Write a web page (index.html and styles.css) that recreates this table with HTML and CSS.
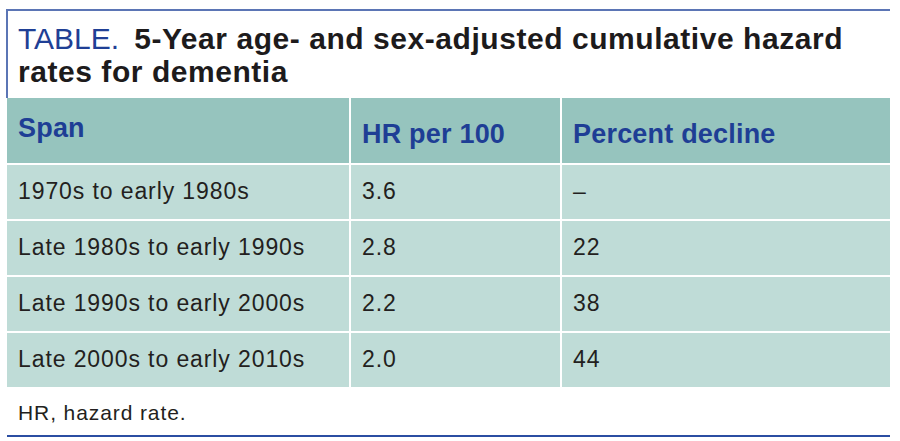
FILE: index.html
```html
<!DOCTYPE html>
<html lang="en">
<head>
<meta charset="utf-8">
<title>TABLE. 5-Year age- and sex-adjusted cumulative hazard rates for dementia</title>
<link rel="stylesheet" href="styles.css">
</head>
<body>
<div class="figure">
  <h1 class="caption"><span class="label">TABLE.</span>5-Year age- and sex-adjusted cumulative hazard<br>rates for dementia</h1>
  <div class="table">
    <div class="cell head first">Span</div>
    <div class="cell head">HR per 100</div>
    <div class="cell head">Percent decline</div>

    <div class="cell">1970s to early 1980s</div>
    <div class="cell">3.6</div>
    <div class="cell">–</div>

    <div class="cell">Late 1980s to early 1990s</div>
    <div class="cell">2.8</div>
    <div class="cell">22</div>

    <div class="cell">Late 1990s to early 2000s</div>
    <div class="cell">2.2</div>
    <div class="cell">38</div>

    <div class="cell">Late 2000s to early 2010s</div>
    <div class="cell">2.0</div>
    <div class="cell">44</div>
  </div>
  <div class="footnote">HR, hazard rate.</div>
</div>
</body>
</html>
```

FILE: styles.css
```css
html, body {
  margin: 0;
  padding: 0;
  background: #ffffff;
}

body {
  font-family: "Liberation Sans", Arial, Helvetica, sans-serif;
  color: #231f20;
}

.figure {
  width: 884px;
  margin-left: 6px;
  padding-top: 9px;
}

.caption {
  margin: 0;
  border-top: 2px solid #5b75b5;
  border-left: 2px solid #5b75b5;
  padding: 11px 0 10px 10px;
  font-size: 30px;
  line-height: 33px;
  font-weight: bold;
  color: #1d1b1c;
  letter-spacing: 0.55px;
  white-space: nowrap;
}

.label {
  font-weight: normal;
  color: #1f3f95;
  letter-spacing: 0;
  margin-right: 15px;
}

.table {
  margin-left: 1px;
  display: grid;
  grid-template-columns: 342px 209px 1fr;
  grid-template-rows: 65px repeat(4, 54px);
  gap: 2px;
  background: #ffffff;
}

.cell {
  background: #bfdcd7;
  padding: 0 0 2px 11px;
  display: flex;
  align-items: center;
  font-size: 23px;
  line-height: 28px;
  letter-spacing: 0.9px;
  color: #231f20;
}

.cell.head {
  background: #96c4be;
  align-items: flex-start;
  padding: 21px 0 0 11px;
  font-size: 27px;
  line-height: 30px;
  font-weight: bold;
  letter-spacing: 0.2px;
  color: #1e3e95;
}

.cell.head.first {
  padding-top: 15px;
}

.footnote {
  margin-left: 1px;
  padding: 14px 0 10px 11px;
  font-size: 21px;
  line-height: 24px;
  letter-spacing: 0.9px;
  color: #231f20;
  border-bottom: 2px solid #2b4ea2;
}
```
